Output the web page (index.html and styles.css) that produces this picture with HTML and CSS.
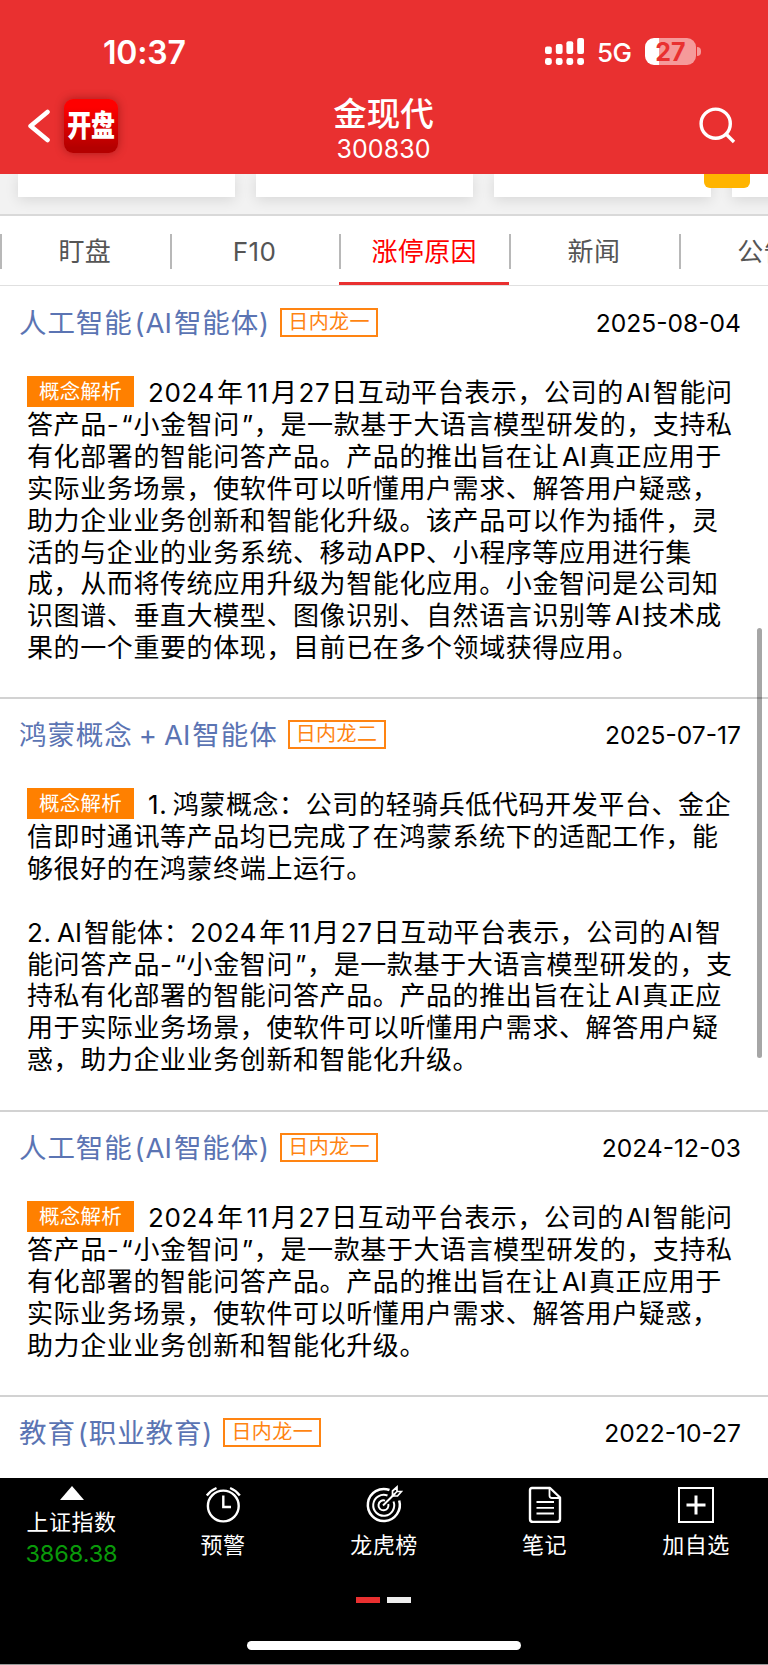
FILE: index.html
```html
<!DOCTYPE html>
<html lang="zh-CN">
<head>
<meta charset="utf-8">
<title>金现代 300830</title>
<link rel="stylesheet" href="styles.css">
</head>
<body>
<div class="screen">
  <header class="header">
    <div class="status">
      <span class="time">10:37</span>
      <div class="status-right">
        <svg class="signal" width="40" height="28" viewBox="0 0 40 28" fill="#fff">
          <rect x="0" y="8.5" width="6.8" height="7.5" rx="2"/><rect x="10.8" y="6" width="6.8" height="10" rx="2"/><rect x="21.4" y="3.3" width="6.8" height="12.7" rx="2"/><rect x="32.2" y="0" width="6.8" height="16" rx="2"/>
          <rect x="0" y="20" width="6.8" height="7" rx="2.4"/><rect x="10.8" y="20" width="6.8" height="7" rx="2.4"/><rect x="21.4" y="20" width="6.8" height="7" rx="2.4"/><rect x="32.2" y="20" width="6.8" height="7" rx="2.4"/>
        </svg>
        <span class="net">5G</span>
        <div class="battery"><span class="level">27</span></div>
        <span class="nub"></span>
      </div>
    </div>
    <div class="navbar">
      <div class="nav-left">
        <svg class="back" width="22" height="36" viewBox="0 0 22 36" fill="none" stroke="#fff" stroke-width="4.6" stroke-linecap="round" stroke-linejoin="round"><path d="M19.500 4 2.600 18 19.500 32"/></svg>
        <div class="app-icon"><span class="app-name">开盘</span></div>
      </div>
      <div class="nav-title"><h1 class="name">金现代</h1><span class="code">300830</span></div>
      <svg class="search" width="38" height="38" viewBox="0 0 38 38" fill="none" stroke="#fff" stroke-width="3.4"><circle cx="17.7" cy="17.7" r="14.6"/><path d="M28 28 36 36"/></svg>
    </div>
  </header>
  <div class="strip">
    <div class="card"></div><div class="card"></div><div class="card"></div><div class="card"></div>
    <div class="float-tag"></div>
  </div>
  <nav class="tabs">
    <span class="tab">盯盘</span><span class="tab">F10</span><span class="tab active">涨停原因</span><span class="tab">新闻</span><span class="tab">公告</span>
  </nav>
  <main class="list">
    <article class="item first">
      <div class="head"><h2 class="concept">人工智能<i class="thin"></i>(<span class="latin">AI</span><i class="thin"></i>智能体)</h2><span class="rank">日内龙一</span><time class="date">2025-08-04</time></div>
      <div class="body">
        <p class="line"><span class="badge">概念解析</span>2024<i class="thin"></i>年<i class="gap"></i>11<i class="thin"></i>月<i class="hair"></i>27<i class="hair"></i>日互动平台表示，公司的<i class="thin"></i><span class="latin">AI</span><i class="thin"></i>智能问</p>
        <p class="line">答产品-<i class="thin"></i>“小金智问<i class="thin"></i>”，是一款基于大语言模型研发的，支持私</p>
        <p class="line">有化部署的智能问答产品。产品的推出旨在让<i class="gap"></i><span class="latin">AI</span><i class="thin"></i>真正应用于</p>
        <p class="line">实际业务场景，使软件可以听懂用户需求、解答用户疑惑，</p>
        <p class="line">助力企业业务创新和智能化升级。该产品可以作为插件，灵</p>
        <p class="line">活的与企业的业务系统、移动<i class="thin"></i><span class="latin">APP</span>、小程序等应用进行集</p>
        <p class="line">成，从而将传统应用升级为智能化应用。小金智问是公司知</p>
        <p class="line">识图谱、垂直大模型、图像识别、自然语言识别等<i class="gap"></i><span class="latin">AI</span><i class="thin"></i>技术成</p>
        <p class="line">果的一个重要的体现，目前已在多个领域获得应用。</p>
      </div>
    </article>
    <article class="item">
      <div class="head"><h2 class="concept">鸿蒙概念 + <span class="latin">AI</span><i class="thin"></i>智能体</h2><span class="rank">日内龙二</span><time class="date">2025-07-17</time></div>
      <div class="body">
        <p class="line"><span class="badge">概念解析</span>1. 鸿蒙概念：公司的轻骑兵低代码开发平台、金企</p>
        <p class="line">信即时通讯等产品均已完成了在鸿蒙系统下的适配工作，能</p>
        <p class="line">够很好的在鸿蒙终端上运行。</p>
        <p class="line blank"></p>
        <p class="line">2. <span class="latin">AI</span><i class="thin"></i>智能体：2024<i class="thin"></i>年<i class="gap"></i>11<i class="thin"></i>月<i class="hair"></i>27<i class="hair"></i>日互动平台表示，公司的<i class="thin"></i><span class="latin">AI</span><i class="thin"></i>智</p>
        <p class="line">能问答产品-<i class="thin"></i>“小金智问<i class="thin"></i>”，是一款基于大语言模型研发的，支</p>
        <p class="line">持私有化部署的智能问答产品。产品的推出旨在让<i class="gap"></i><span class="latin">AI</span><i class="thin"></i>真正应</p>
        <p class="line">用于实际业务场景，使软件可以听懂用户需求、解答用户疑</p>
        <p class="line">惑，助力企业业务创新和智能化升级。</p>
      </div>
    </article>
    <article class="item">
      <div class="head"><h2 class="concept">人工智能<i class="thin"></i>(<span class="latin">AI</span><i class="thin"></i>智能体)</h2><span class="rank">日内龙一</span><time class="date">2024-12-03</time></div>
      <div class="body">
        <p class="line"><span class="badge">概念解析</span>2024<i class="thin"></i>年<i class="gap"></i>11<i class="thin"></i>月<i class="hair"></i>27<i class="hair"></i>日互动平台表示，公司的<i class="thin"></i><span class="latin">AI</span><i class="thin"></i>智能问</p>
        <p class="line">答产品-<i class="thin"></i>“小金智问<i class="thin"></i>”，是一款基于大语言模型研发的，支持私</p>
        <p class="line">有化部署的智能问答产品。产品的推出旨在让<i class="gap"></i><span class="latin">AI</span><i class="thin"></i>真正应用于</p>
        <p class="line">实际业务场景，使软件可以听懂用户需求、解答用户疑惑，</p>
        <p class="line">助力企业业务创新和智能化升级。</p>
      </div>
    </article>
    <article class="item">
      <div class="head"><h2 class="concept">教育<i class="thin"></i>(职业教育)</h2><span class="rank">日内龙一</span><time class="date">2022-10-27</time></div>
    </article>
  </main>
  <div class="scrollbar"></div>
  <footer class="footer">
    <div class="actions">
      <div class="index"><span class="up"></span><span class="label">上证指数</span><span class="value">3868.38</span></div>
      <div class="action">
        <svg width="36" height="38" viewBox="0 0 36 38" fill="none" stroke="#fff" stroke-width="2.4"><circle cx="18.3" cy="21" r="15.4"/><path d="M18.300 10.500V22H26M1.800 10.500Q5.500 5.500 11.500 3M34.800 10.500Q31.100 5.500 25.100 3"/></svg>
        <span class="label">预警</span>
      </div>
      <div class="action">
        <svg width="38" height="38" viewBox="0 0 38 38" fill="none" stroke="#fff" stroke-width="2.500"><path d="M24.500 5A16 16 0 1 0 34.200 15.500"/><path d="M22.500 10.500A10.500 10.500 0 1 0 28.500 16.500M20 15.600A5 5 0 1 0 23.300 19M18 20.500 30 8.500" stroke-width="2"/><path d="M27.500 11V6L32 2V6.500H36.500L32.500 11ZM27.500 11 32 6.500" stroke-width="1.700"/></svg>
        <span class="label">龙虎榜</span>
      </div>
      <div class="action">
        <svg width="36" height="38" viewBox="0 0 36 38" fill="none" stroke="#fff" stroke-width="2.4" stroke-linejoin="round"><path d="M5 3H23L33 12.500V34Q33 37 30 37H6Q3 37 3 34V5Q3 3 5 3Z"/><path d="M22.500 3V10.500Q22.500 13 25 13H33M9.500 17H27M9.500 22.800H27M9.500 28.500H27" stroke-width="1.800"/></svg>
        <span class="label">笔记</span>
      </div>
      <div class="action">
        <svg width="38" height="38" viewBox="0 0 38 38" fill="none" stroke="#fff"><rect x="2" y="3" width="34" height="34" stroke-width="2"/><path d="M19 10.500V29.500M9.500 20H28.500" stroke-width="3"/></svg>
        <span class="label">加自选</span>
      </div>
    </div>
    <div class="pager"><span class="dash on"></span><span class="dash"></span></div>
    <div class="home-bar"></div>
  </footer>
</div>
</body>
</html>
```
FILE: styles.css
```css
* { box-sizing: border-box; }
body { margin: 0; background: #fff; font-family: Inter, "Noto Sans CJK SC", sans-serif; color: #000; }
h1, h2, p { margin: 0; font-weight: 400; }
svg { display: block; flex: none; }
.screen { position: relative; width: 768px; height: 1665px; overflow: hidden; display: flex; flex-direction: column; }

.header { height: 174px; flex: none; background: #e93030; color: #fff; }
.status { height: 92px; display: flex; justify-content: space-between; padding: 32px 67px 0 103px; }
.time { font-size: 32px; line-height: 41px; font-weight: 600; letter-spacing: -0.2px; }
.status-right { display: flex; align-items: flex-start; padding-top: 6px; }
.net { width: 48px; margin-left: 12px; margin-top: 1px; font-size: 26px; line-height: 28px; font-weight: 450; letter-spacing: -0.5px; }
.battery { width: 51px; height: 27px; border-radius: 9px; background: linear-gradient(90deg, #fff 14px, #f59a9a 14px); color: #e93030; text-align: center; }
.level { font-size: 25px; line-height: 28px; font-weight: 700; }
.nub { width: 4px; height: 9px; margin: 9px 0 0 1px; border-radius: 0 5px 5px 0; background: #f59a9a; }
.navbar { height: 82px; display: grid; grid-template-columns: 1fr auto 1fr; align-items: start; }
.nav-left { display: flex; align-items: center; gap: 13px; padding: 7px 0 0 28px; }
.app-icon { width: 54px; height: 54px; margin-left: 1px; border-radius: 9px; background: linear-gradient(#fe0000 15%, #b40000 90%); box-shadow: 0 0 10px rgba(90, 0, 0, .45); display: flex; align-items: center; justify-content: center; }
.app-name { font-size: 24px; line-height: 30px; font-weight: 900; letter-spacing: -0.3px; transform: scaleY(1.25); }
.nav-title { display: flex; flex-direction: column; align-items: center; margin-left: -1px; }
.name { font-size: 33.500px; line-height: 45px; font-weight: 500; }
.code { font-size: 25px; line-height: 25px; letter-spacing: .05px; }
.search { justify-self: end; margin: 14px 32px 0 0; }

.strip { position: relative; height: 42px; flex: none; display: flex; gap: 21px; padding-left: 18px; background: #f2f2f2; border-bottom: 2px solid #d9d9d9; overflow: hidden; }
.card { width: 217px; height: 23px; flex: none; background: #fff; box-shadow: 0 3px 14px rgba(0, 0, 0, .11); }
.float-tag { position: absolute; left: 704px; top: 0; width: 46px; height: 14px; border-radius: 0 0 6px 6px; background: #ffb400; }

.tabs { height: 70px; flex: none; display: flex; border-bottom: 1px solid #e0e0e0; overflow: hidden; }
.tab { position: relative; width: 169.700px; height: 70px; flex: none; text-align: center; font-size: 26px; line-height: 72px; letter-spacing: .4px; color: #555; }
.tab::before { content: ""; position: absolute; left: 0; top: 18px; width: 2px; height: 35px; background: #b8b8b8; }
.tab.active { color: #f00; box-shadow: inset 0 -4px #e93030; }

.list { flex: 1; min-height: 0; overflow: hidden; }
.item { border-top: 2px solid #d2d2d2; height: 413px; }
.item.first { height: 412px; border-color: transparent; margin-top: -1px; }
.item:nth-child(3) { height: 285px; }
.head { display: flex; align-items: center; height: 71px; padding: 0 27px 0 19px; }
.concept { font-size: 27.500px; line-height: 40px; letter-spacing: .9px; word-spacing: -2.500px; color: #5b74b3; }
.latin { letter-spacing: 0; }
.hair, .thin, .gap { display: inline-block; width: 2px; }
.hair { width: 1px; }
.gap { width: 3px; }
.rank { height: 29px; width: 98px; margin-left: 10px; border: 2px solid #ff8412; color: #ff8412; font-size: 20px; line-height: 24px; letter-spacing: .4px; text-align: center; }
.date { margin-left: auto; font-size: 24.600px; }
.body { padding: 19px 0 0 27px; }
.line { height: 31.920px; font-size: 26px; line-height: 31.920px; letter-spacing: .6px; word-spacing: -2.500px; white-space: nowrap; }
.badge { display: inline-block; width: 107px; height: 31px; margin: -1px 14px 0 0; vertical-align: top; background: #ff8000; color: #fff; font-size: 20.500px; line-height: 31px; letter-spacing: .3px; text-align: center; }

.scrollbar { position: absolute; left: 757px; top: 628px; width: 5px; height: 430px; border-radius: 3px; background: rgba(0, 0, 0, .35); }

.footer { height: 187px; flex: none; background: #000; color: #fff; border-bottom: 1px solid #999; }
.actions { height: 119px; display: grid; grid-template-columns: 143px 160px 162px 159px 144px; }
.index, .action { display: flex; flex-direction: column; align-items: center; }
.action { padding-top: 7px; }
.up { width: 0; height: 0; margin-top: 8px; border: 12px solid transparent; border-top: 0; border-bottom: 14px solid #fff; }
.label { font-size: 22px; line-height: 45px; letter-spacing: .5px; }
.value { margin-top: -3px; font-size: 23.500px; line-height: 24px; letter-spacing: -.1px; color: #0a9a0a; }
.pager { display: flex; justify-content: center; gap: 7px; padding-right: 1px; }
.dash { width: 24px; height: 6px; background: #eee; }
.dash.on { background: #e93030; }
.home-bar { width: 274px; height: 9px; margin: 38px auto 0; border-radius: 5px; background: #fff; }
```
